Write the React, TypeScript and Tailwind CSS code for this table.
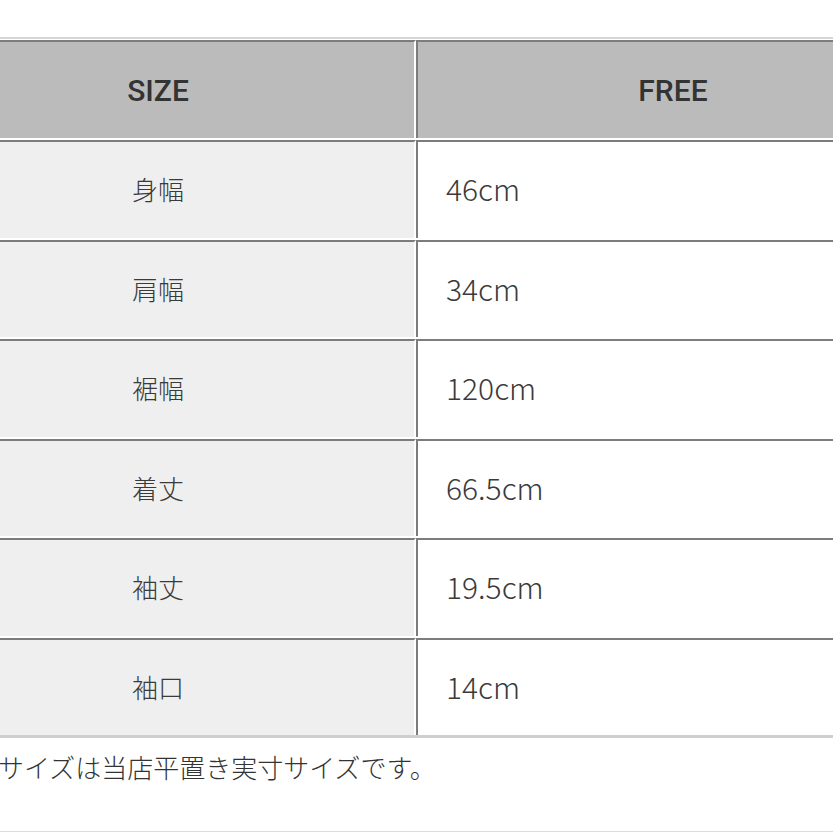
import React from "react";

const rows: [string, string][] = [
  ["身幅", "46cm"],
  ["肩幅", "34cm"],
  ["裾幅", "120cm"],
  ["着丈", "66.5cm"],
  ["袖丈", "19.5cm"],
  ["袖口", "14cm"],
];

export default function App() {
  return (
    <div
      className="w-[833px] h-[833px] overflow-hidden bg-white relative"
      style={{ fontFamily: '"Noto Sans CJK JP", "Noto Sans", sans-serif' }}
    >
      <div className="pt-[37px] ml-[-100px] w-[1040px]">
        <div className="border-t-2 border-[#d6d6d6] pt-px border-b-[3px] border-b-[#cfcfcf]">
          {/* header */}
          <div className="flex h-[98px]">
            <div className="w-[516px] h-full border-t-2 border-l-2 border-[#7c7c7c] border-r-2 border-r-white bg-[#bbbbbb] flex items-center justify-center">
              <span
                className="text-[30px] font-medium text-[#333333]"
                style={{ fontFamily: 'Roboto, "Liberation Sans", sans-serif' }}
              >
                SIZE
              </span>
            </div>
            <div className="w-[516px] h-full border-t-2 border-l-2 border-[#7c7c7c] bg-[#bbbbbb] flex items-center justify-center pr-[4px]">
              <span
                className="text-[30px] font-medium text-[#333333]"
                style={{ fontFamily: 'Roboto, "Liberation Sans", sans-serif' }}
              >
                FREE
              </span>
            </div>
          </div>
          <div className="flex flex-col gap-y-[2px] pt-[2px]">
            {rows.map(([label, value]) => (
              <div key={label} className="flex h-[97.5px]">
                <div className="w-[516px] h-full border-t-2 border-l-2 border-[#7c7c7c] border-r-2 border-r-white bg-[#efefef] flex items-center justify-center pb-[2px]">
                  <span className="text-[26px] font-light text-[#3a3a3a]">{label}</span>
                </div>
                <div className="w-[516px] h-full border-t-2 border-l-2 border-[#7c7c7c] bg-white flex items-center pl-[28px] pb-[2px]">
                  <span className="text-[30px] font-light text-[#3a3a3a]">{value}</span>
                </div>
              </div>
            ))}
          </div>
        </div>
      </div>
      <div className="h-[56px] flex items-center ml-[-2px]">
        <span className="text-[26px] font-light text-[#333333] whitespace-nowrap">
          サイズは当店平置き実寸サイズです。
        </span>
      </div>
      <div className="absolute left-0 right-0 bottom-[1px] h-px bg-[#dcdcdc]" />
    </div>
  );
}
